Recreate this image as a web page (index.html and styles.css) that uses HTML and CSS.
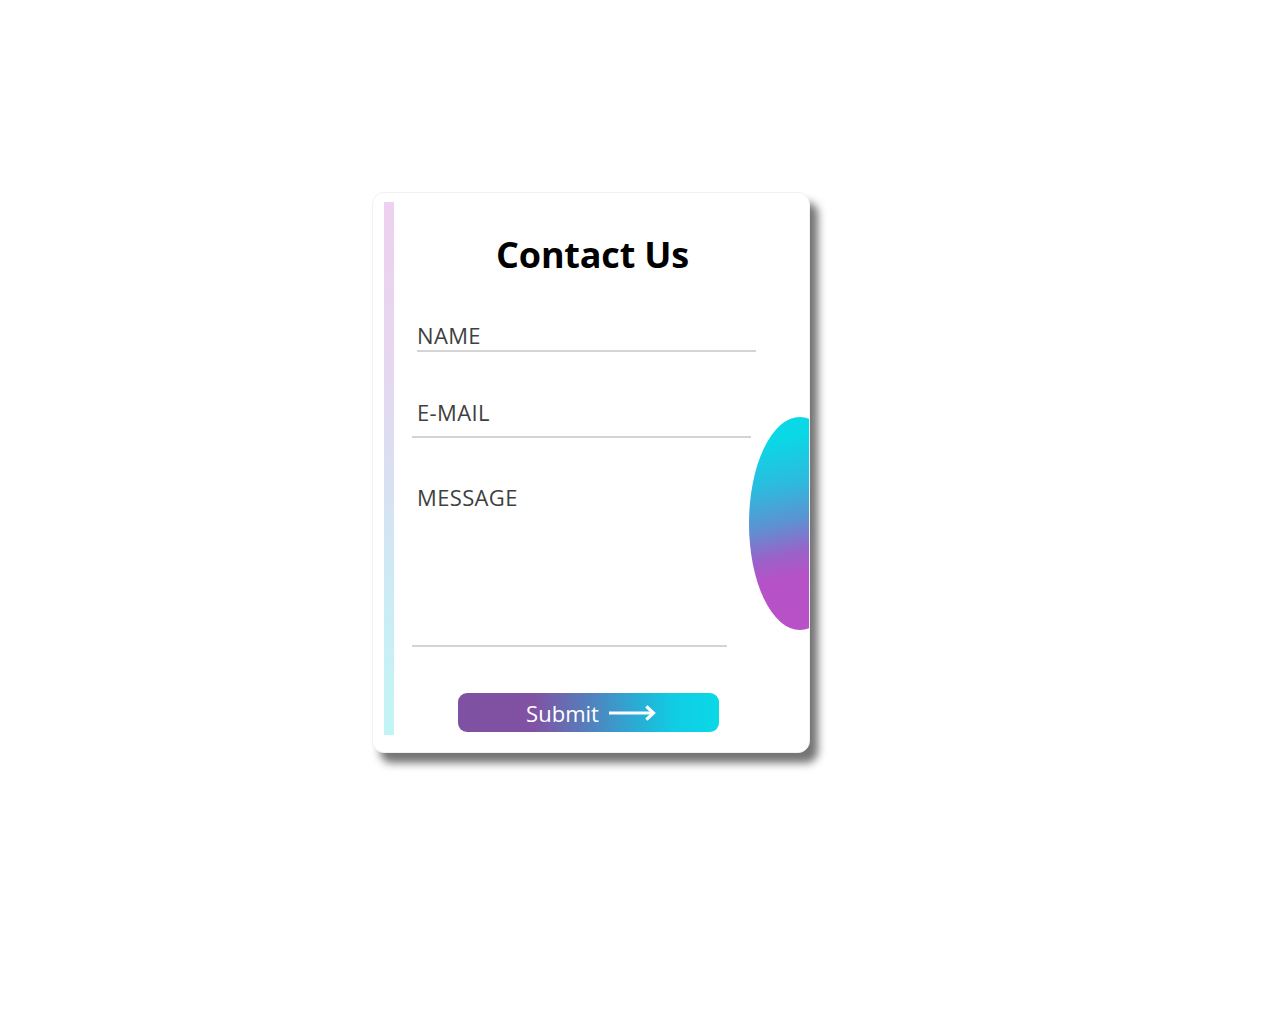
FILE: index.html
```html
<!DOCTYPE html>
<html lang="en">
<head>
<meta charset="utf-8">
<title>Contact Us</title>
<link rel="stylesheet" href="styles.css">
</head>
<body>
<div class="page">
  <form class="card">
    <div class="stripe"></div>
    <div class="main">
      <h1 class="title">Contact Us</h1>
      <div class="field field-name"><span class="label">NAME</span></div>
      <div class="field field-email"><span class="label">E-MAIL</span></div>
      <div class="field field-message"><span class="label">MESSAGE</span></div>
      <button type="button" class="submit">
        <span>Submit</span>
        <svg class="arrow" width="49" height="16" viewBox="0 0 49 16" aria-hidden="true">
          <path d="M1 8 H45" stroke="#fff" stroke-width="3" fill="none"/>
          <path d="M39.5 2.5 L45.5 8 L39.5 13.5" stroke="#fff" stroke-width="3.2" fill="none" stroke-linecap="square"/>
        </svg>
      </button>
    </div>
    <div class="blob"></div>
  </form>
</div>
</body>
</html>
```
FILE: styles.css
```css
html, body {
  margin: 0;
  padding: 0;
  background: #ffffff;
}

body {
  font-family: "Open Sans", "Liberation Sans", sans-serif;
  min-height: 1024px;
}

.page {
  padding: 192px 0 120px 372px;
}

.card {
  position: relative;
  box-sizing: border-box;
  width: 438px;
  height: 561px;
  margin: 0;
  background: #ffffff;
  border: 1px solid #f1f1f1;
  border-radius: 12px;
  box-shadow: 8px 10px 8px rgba(0, 0, 0, 0.55);
  overflow: hidden;
  display: flex;
  padding-left: 11px;
}

.stripe {
  width: 10px;
  margin: 9px 0 17px;
  background: linear-gradient(180deg, #edd1ef 0%, #e6d6f0 30%, #d7e2f3 55%, #c9eef5 80%, #c2f4f5 100%);
  flex-shrink: 0;
}

.main {
  flex: 1;
  display: flex;
  flex-direction: column;
  align-items: flex-start;
  padding: 40px 18px 0 0;
}

.title {
  align-self: stretch;
  margin: 0;
  font-size: 36px;
  line-height: 44px;
  font-weight: 700;
  color: #000;
  text-align: center;
  letter-spacing: -0.2px;
}

.field {
  border-bottom: 2px solid #d4d4d4;
  box-sizing: content-box;
}

.label {
  display: block;
  font-size: 22px;
  line-height: 29px;
  color: #3f3f3f;
  letter-spacing: 0.35px;
}

.field-name {
  margin: 44px 0 0 23px;
  width: 339px;
}

.field-email {
  margin: 46px 0 0 18px;
  width: 339px;
  padding-bottom: 9px;
}

.field-email .label,
.field-message .label {
  padding-left: 5px;
}

.field-message {
  margin: 45px 0 0 18px;
  width: 315px;
  height: 162px;
}

.submit {
  margin: 46px 0 0 64px;
  width: 261px;
  height: 39px;
  border: none;
  border-radius: 9px;
  padding: 0 0 0 6px;
  background: linear-gradient(90deg, #7f51a2 0%, #8152a3 29%, #5a79b9 47%, #2aabd4 68%, #10cde3 83%, #0ad8e7 100%);
  color: #fff;
  font-family: "Open Sans", "Liberation Sans", sans-serif;
  font-size: 22px;
  line-height: 30px;
  display: flex;
  align-items: center;
  justify-content: center;
  gap: 9px;
  cursor: pointer;
}

.arrow {
  display: block;
  margin-top: 1px;
}

.blob {
  position: absolute;
  left: 376px;
  top: 224px;
  width: 102px;
  height: 213px;
  border-radius: 50%;
  background: linear-gradient(168deg, #0ad8e6 12%, #2dbade 32%, #5b93d2 48%, #9a62c9 62%, #b652c8 72%, #b950c7 100%);
}
```
